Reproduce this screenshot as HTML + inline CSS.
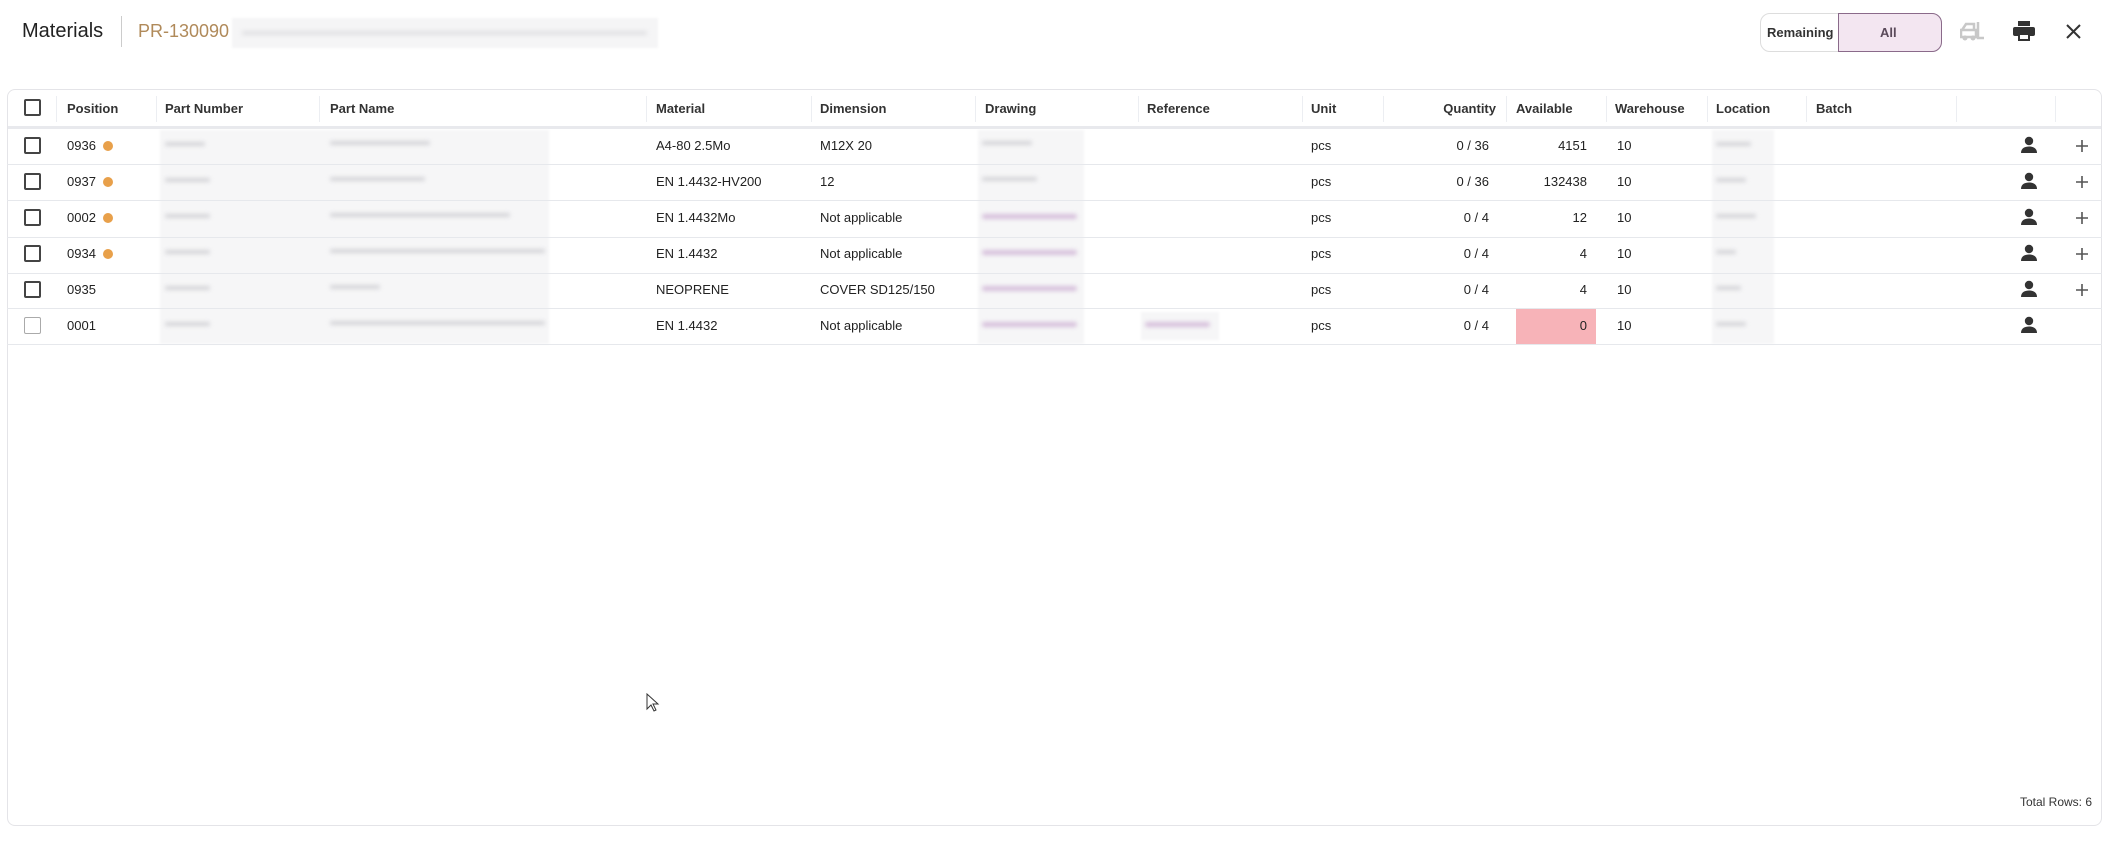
<!DOCTYPE html>
<html><head><meta charset="utf-8"><style>
*{box-sizing:border-box;margin:0;padding:0}
body{width:2109px;height:847px;background:#fff;font-family:"Liberation Sans",sans-serif;color:#222;position:relative;overflow:hidden}
.a{position:absolute;white-space:nowrap}
.cell{position:absolute;font-size:13px;color:#222}
.hd{position:absolute;font-size:13px;font-weight:bold;color:#333;top:101px}
.sep{position:absolute;top:96px;width:1px;height:26px;background:#eceef2}
.rl{position:absolute;left:7px;width:2095px;height:1px;background:#e6e8ec}
.cb{position:absolute;left:24px;width:17px;height:17px;border:2px solid #444;border-radius:2px}
.dot{display:inline-block;width:10px;height:10px;border-radius:50%;background:#e8a04a;margin-left:7px;vertical-align:-1px}
.blur{position:absolute;background:#f6f6f7;filter:blur(1px)}
.bl{position:absolute;height:4px;border-radius:3px;background:#d4d4d8;filter:blur(2px)}
.pb{position:absolute;height:5px;border-radius:3px;background:#d6bfdb;filter:blur(2px)}
</style></head><body>
<div class="a" style="left:22px;top:20px;font-size:20px;color:#222">Materials</div>
<div class="a" style="left:121px;top:16px;width:1px;height:31px;background:#ccc"></div>
<div class="a" style="left:138px;top:21px;font-size:18px;color:#b08a5a">PR-130090</div>
<div class="blur" style="left:232px;top:18px;width:426px;height:30px;background:#f5f5f6"></div>
<div class="bl" style="left:242px;top:31px;width:405px;background:#e0e0e3"></div>

<div class="a" style="left:1760px;top:13px;width:182px;height:39px;border:1px solid #ddd;border-radius:10px"></div>
<div class="a" style="left:1838px;top:13px;width:104px;height:39px;border:1px solid #8a6a8a;border-radius:0 10px 10px 0;background:#f3e6f1"></div>
<div class="a" style="left:1767px;top:25px;font-size:13px;font-weight:bold;color:#333">Remaining</div>
<div class="a" style="left:1880px;top:25px;font-size:13px;font-weight:bold;color:#5a4a5a">All</div>
<svg class="a" style="left:1960px;top:20px" width="26" height="22" viewBox="0 0 26 22"><path d="M2 10h12V4H6l-4 6zM1 10h15v7H1z M18 2v16h6" fill="none" stroke="#c8c8c8" stroke-width="2.5"/><circle cx="5" cy="18" r="2.5" fill="#c8c8c8"/><circle cx="13" cy="18" r="2.5" fill="#c8c8c8"/></svg>
<svg class="a" style="left:2013px;top:21px" width="22" height="20" viewBox="0 0 22 20"><rect x="5" y="0" width="12" height="5" fill="#333"/><rect x="0" y="6" width="22" height="9" rx="2" fill="#333"/><rect x="5" y="12" width="12" height="8" fill="#333"/><rect x="7" y="14" width="8" height="4" fill="#fff"/></svg>
<svg class="a" style="left:2066px;top:24px" width="15" height="15" viewBox="0 0 15 15"><path d="M1 1L14 14M14 1L1 14" stroke="#333" stroke-width="2"/></svg>

<div class="a" style="left:7px;top:89px;width:2095px;height:737px;border:1px solid #e4e4e8;border-radius:8px"></div>
<div class="a" style="left:8px;top:126px;width:2093px;height:3px;background:#e8e9ed"></div>
<div class="cb" style="top:99px"></div>
<div class="sep" style="left:56px"></div><div class="hd" style="left:67px">Position</div>
<div class="sep" style="left:156px"></div><div class="hd" style="left:165px">Part Number</div>
<div class="sep" style="left:319px"></div><div class="hd" style="left:330px">Part Name</div>
<div class="sep" style="left:646px"></div><div class="hd" style="left:656px">Material</div>
<div class="sep" style="left:811px"></div><div class="hd" style="left:820px">Dimension</div>
<div class="sep" style="left:975px"></div><div class="hd" style="left:985px">Drawing</div>
<div class="sep" style="left:1138px"></div><div class="hd" style="left:1147px">Reference</div>
<div class="sep" style="left:1302px"></div><div class="hd" style="left:1311px">Unit</div>
<div class="sep" style="left:1383px"></div><div class="hd" style="left:1383px;width:113px;text-align:right">Quantity</div>
<div class="sep" style="left:1506px"></div><div class="hd" style="left:1516px">Available</div>
<div class="sep" style="left:1606px"></div><div class="hd" style="left:1615px">Warehouse</div>
<div class="sep" style="left:1707px"></div><div class="hd" style="left:1716px">Location</div>
<div class="sep" style="left:1806px"></div><div class="hd" style="left:1816px">Batch</div>
<div class="sep" style="left:1956px"></div>
<div class="sep" style="left:2055px"></div>

<div class="blur" style="left:160px;top:130px;width:389px;height:214px"></div>
<div class="blur" style="left:978px;top:130px;width:106px;height:214px"></div>
<div class="blur" style="left:1712px;top:130px;width:62px;height:214px"></div>
<div class="blur" style="left:1141px;top:312px;width:78px;height:28px"></div>

<div class="rl" style="top:164px"></div>
<div class="rl" style="top:200px"></div>
<div class="rl" style="top:237px"></div>
<div class="rl" style="top:273px"></div>
<div class="rl" style="top:308px"></div>
<div class="rl" style="top:344px"></div>

<div class="cb" style="top:137px"></div><div class="cell" style="left:67px;top:138px">0936<span class="dot"></span></div>
<div class="bl" style="left:165px;top:142px;width:40px"></div><div class="bl" style="left:330px;top:141px;width:100px"></div>
<div class="cell" style="left:656px;top:138px">A4-80 2.5Mo</div><div class="cell" style="left:820px;top:138px">M12X 20</div>
<div class="bl" style="left:982px;top:141px;width:50px"></div>
<div class="cell" style="left:1311px;top:138px">pcs</div><div class="cell" style="left:1383px;width:106px;text-align:right;top:138px">0 / 36</div>
<div class="cell" style="left:1506px;width:81px;text-align:right;top:138px">4151</div><div class="cell" style="left:1617px;top:138px">10</div>
<div class="bl" style="left:1716px;top:142px;width:35px"></div>

<div class="cb" style="top:173px"></div><div class="cell" style="left:67px;top:174px">0937<span class="dot"></span></div>
<div class="bl" style="left:165px;top:178px;width:45px"></div><div class="bl" style="left:330px;top:177px;width:95px"></div>
<div class="cell" style="left:656px;top:174px">EN 1.4432-HV200</div><div class="cell" style="left:820px;top:174px">12</div>
<div class="bl" style="left:982px;top:177px;width:55px"></div>
<div class="cell" style="left:1311px;top:174px">pcs</div><div class="cell" style="left:1383px;width:106px;text-align:right;top:174px">0 / 36</div>
<div class="cell" style="left:1506px;width:81px;text-align:right;top:174px">132438</div><div class="cell" style="left:1617px;top:174px">10</div>
<div class="bl" style="left:1716px;top:178px;width:30px"></div>

<div class="cb" style="top:209px"></div><div class="cell" style="left:67px;top:210px">0002<span class="dot"></span></div>
<div class="bl" style="left:165px;top:214px;width:45px"></div><div class="bl" style="left:330px;top:213px;width:180px"></div>
<div class="cell" style="left:656px;top:210px">EN 1.4432Mo</div><div class="cell" style="left:820px;top:210px">Not applicable</div>
<div class="pb" style="left:982px;top:214px;width:95px"></div>
<div class="cell" style="left:1311px;top:210px">pcs</div><div class="cell" style="left:1383px;width:106px;text-align:right;top:210px">0 / 4</div>
<div class="cell" style="left:1506px;width:81px;text-align:right;top:210px">12</div><div class="cell" style="left:1617px;top:210px">10</div>
<div class="bl" style="left:1716px;top:214px;width:40px"></div>

<div class="cb" style="top:245px"></div><div class="cell" style="left:67px;top:246px">0934<span class="dot"></span></div>
<div class="bl" style="left:165px;top:250px;width:45px"></div><div class="bl" style="left:330px;top:249px;width:215px"></div>
<div class="cell" style="left:656px;top:246px">EN 1.4432</div><div class="cell" style="left:820px;top:246px">Not applicable</div>
<div class="pb" style="left:982px;top:250px;width:95px"></div>
<div class="cell" style="left:1311px;top:246px">pcs</div><div class="cell" style="left:1383px;width:106px;text-align:right;top:246px">0 / 4</div>
<div class="cell" style="left:1506px;width:81px;text-align:right;top:246px">4</div><div class="cell" style="left:1617px;top:246px">10</div>
<div class="bl" style="left:1716px;top:250px;width:20px"></div>

<div class="cb" style="top:281px"></div><div class="cell" style="left:67px;top:282px">0935</div>
<div class="bl" style="left:165px;top:286px;width:45px"></div><div class="bl" style="left:330px;top:285px;width:50px"></div>
<div class="cell" style="left:656px;top:282px">NEOPRENE</div><div class="cell" style="left:820px;top:282px">COVER SD125/150</div>
<div class="pb" style="left:982px;top:286px;width:95px"></div>
<div class="cell" style="left:1311px;top:282px">pcs</div><div class="cell" style="left:1383px;width:106px;text-align:right;top:282px">0 / 4</div>
<div class="cell" style="left:1506px;width:81px;text-align:right;top:282px">4</div><div class="cell" style="left:1617px;top:282px">10</div>
<div class="bl" style="left:1716px;top:286px;width:25px"></div>

<div class="cb" style="top:317px;border-color:#aaa;border-width:1.5px"></div><div class="cell" style="left:67px;top:318px">0001</div>
<div class="bl" style="left:165px;top:322px;width:45px"></div><div class="bl" style="left:330px;top:321px;width:215px"></div>
<div class="cell" style="left:656px;top:318px">EN 1.4432</div><div class="cell" style="left:820px;top:318px">Not applicable</div>
<div class="pb" style="left:982px;top:322px;width:95px"></div><div class="pb" style="left:1145px;top:322px;width:65px"></div>
<div class="cell" style="left:1311px;top:318px">pcs</div><div class="cell" style="left:1383px;width:106px;text-align:right;top:318px">0 / 4</div>
<div class="a" style="left:1516px;top:309px;width:80px;height:35px;background:#f7b3b8"></div>
<div class="cell" style="left:1506px;width:81px;text-align:right;top:318px">0</div><div class="cell" style="left:1617px;top:318px">10</div>
<div class="bl" style="left:1716px;top:322px;width:30px"></div>

<svg width="0" height="0" style="position:absolute"><defs><symbol id="p" viewBox="0 0 18 18"><circle cx="9" cy="5" r="4.2" fill="#333"/><path d="M1 17c0-5 4-6.5 8-6.5s8 1.5 8 6.5z" fill="#333"/></symbol><symbol id="plus" viewBox="0 0 12 12"><path d="M6 0v12M0 6h12" stroke="#555" stroke-width="1.6"/></symbol></defs></svg>
<svg class="a" style="left:2020px;top:136px" width="18" height="18"><use href="#p"/></svg>
<svg class="a" style="left:2020px;top:172px" width="18" height="18"><use href="#p"/></svg>
<svg class="a" style="left:2020px;top:208px" width="18" height="18"><use href="#p"/></svg>
<svg class="a" style="left:2020px;top:244px" width="18" height="18"><use href="#p"/></svg>
<svg class="a" style="left:2020px;top:280px" width="18" height="18"><use href="#p"/></svg>
<svg class="a" style="left:2020px;top:316px" width="18" height="18"><use href="#p"/></svg>
<svg class="a" style="left:2076px;top:140px" width="12" height="12"><use href="#plus"/></svg>
<svg class="a" style="left:2076px;top:176px" width="12" height="12"><use href="#plus"/></svg>
<svg class="a" style="left:2076px;top:212px" width="12" height="12"><use href="#plus"/></svg>
<svg class="a" style="left:2076px;top:248px" width="12" height="12"><use href="#plus"/></svg>
<svg class="a" style="left:2076px;top:284px" width="12" height="12"><use href="#plus"/></svg>

<svg class="a" style="left:646px;top:693px" width="14" height="20" viewBox="0 0 14 20"><path d="M1 1v15l4-4 3 6 2-1-3-6h5z" fill="#fff" stroke="#333" stroke-width="1"/></svg>
<div class="a" style="right:17px;top:795px;font-size:12px;color:#333">Total Rows: 6</div>
</body></html>
